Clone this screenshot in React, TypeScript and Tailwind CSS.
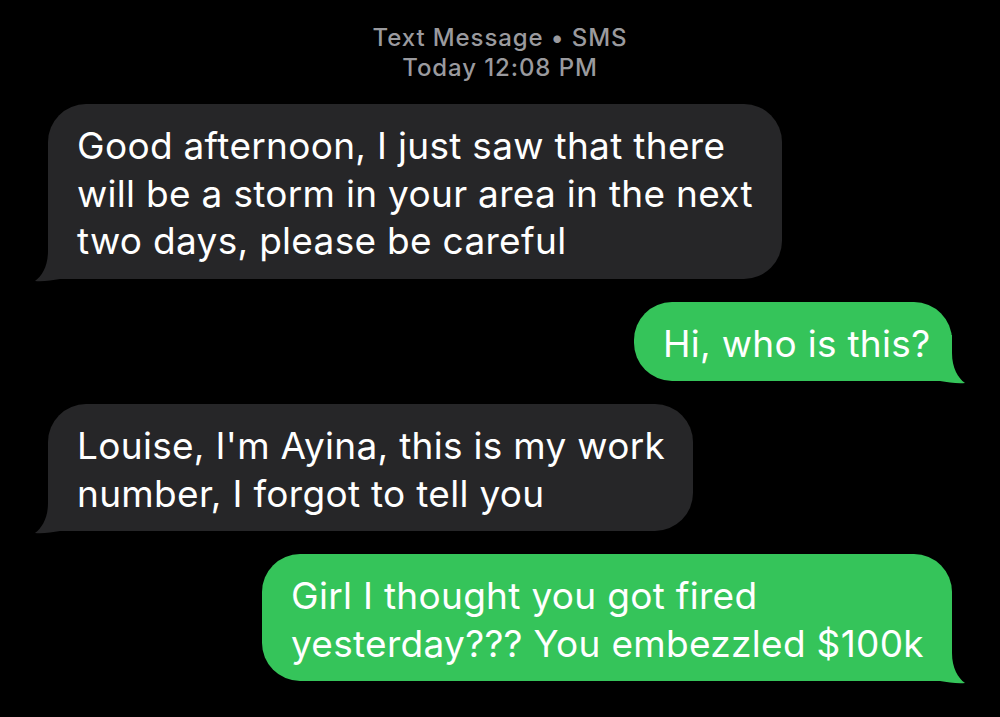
import React from "react";

const GRAY = "#262628";
const GREEN = "#35c45a";

function TailLeft({ color }: { color: string }) {
  return (
    <svg
      className="absolute left-[-14px] bottom-[-3px]"
      width="60"
      height="50"
      viewBox="-14 -47 60 50"
    >
      <path
        d="M0 -46 L0 -28 C0 -13 -6 -3 -13 2 C -5 3 4 1 12 0 L46 0 L46 -46 Z"
        fill={color}
      />
    </svg>
  );
}

function TailRight({ color }: { color: string }) {
  return (
    <svg
      className="absolute right-[-14px] bottom-[-3px]"
      width="60"
      height="50"
      viewBox="-46 -47 60 50"
    >
      <path
        d="M0 -46 L0 -28 C0 -13 6 -3 13 2 C 5 3 -4 1 -12 0 L-46 0 L-46 -46 Z"
        fill={color}
      />
    </svg>
  );
}

function Bubble({
  side,
  lines,
  width,
}: {
  side: "left" | "right";
  lines: string[];
  width: string;
}) {
  const isLeft = side === "left";
  return (
    <div className={`flex ${isLeft ? "justify-start" : "justify-end"}`}>
      <div
        className={`relative rounded-[38px] pt-[18px] pb-[14px] pl-[29px] text-[37px] tracking-[0.3px] leading-[47.5px] text-white ${width} ${
          isLeft ? "bg-[#262628]" : "bg-[#35c45a]"
        }`}
      >
        {isLeft ? <TailLeft color={GRAY} /> : <TailRight color={GREEN} />}
        <div className="relative whitespace-nowrap">
          {lines.map((l, i) => (
            <div key={i}>{l}</div>
          ))}
        </div>
      </div>
    </div>
  );
}

export default function App() {
  return (
    <div
      className="w-[1000px] h-[717px] bg-black overflow-hidden"
      style={{ fontFamily: "Inter, 'Noto Sans', sans-serif" }}
    >
      <div className="pt-[23px] text-center text-[24px] tracking-[0.9px] leading-[30px] text-[#9a9a9e] font-medium">
        <div>Text Message • SMS</div>
        <div>Today 12:08 PM</div>
      </div>
      <div className="mt-[21px] flex flex-col gap-[23px] px-[48px]">
        <Bubble
          side="left"
          width="w-[734px]"
          lines={[
            "Good afternoon, I just saw that there",
            "will be a storm in your area in the next",
            "two days, please be careful",
          ]}
        />
        <Bubble side="right" width="w-[318px]" lines={["Hi, who is this?"]} />
        <Bubble
          side="left"
          width="w-[645px]"
          lines={["Louise, I'm Ayina, this is my work", "number, I forgot to tell you"]}
        />
        <Bubble
          side="right"
          width="w-[690px]"
          lines={["Girl I thought you got fired", "yesterday??? You embezzled $100k"]}
        />
      </div>
    </div>
  );
}
